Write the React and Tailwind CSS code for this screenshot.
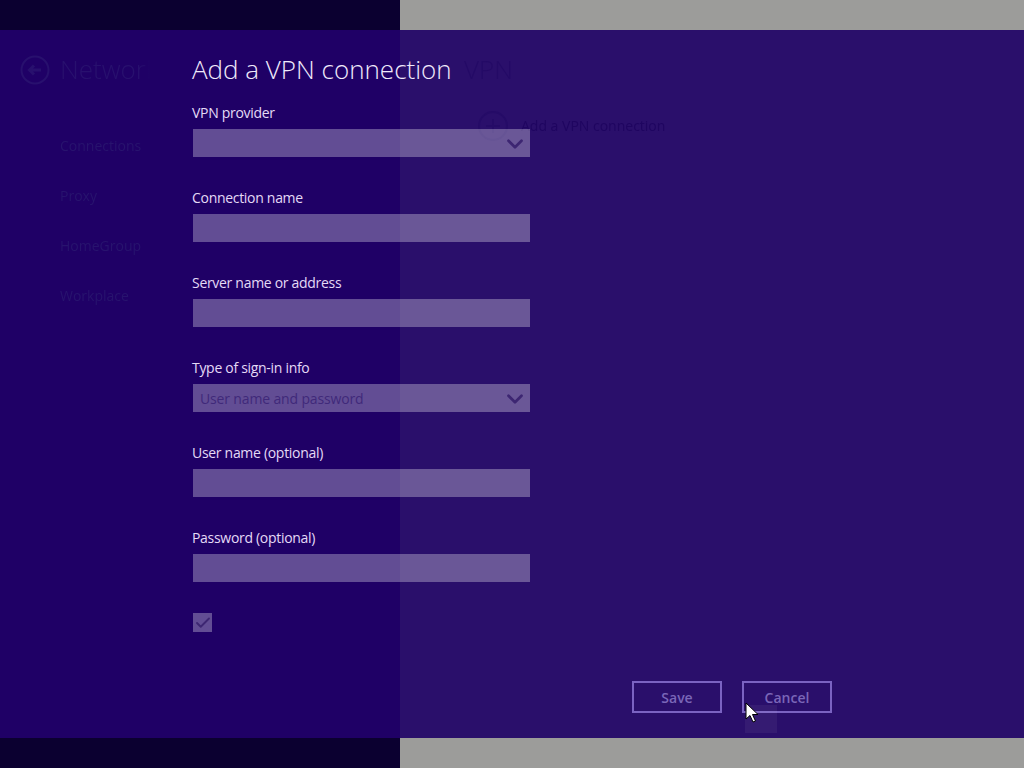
import { ChevronDown, Check } from "lucide-react";

const fields = [
  { label: "VPN provider", select: true },
  { label: "Connection name" },
  { label: "Server name or address" },
  { label: "Type of sign-in info", select: true, value: "User name and password" },
  { label: "User name (optional)" },
  { label: "Password (optional)" },
];

function Field({ label, select, value }) {
  return (
    <div className="h-[85px]">
      <div className="flex h-[30px] items-center pb-[4px] text-[14px] tracking-[-0.3px] text-[#e4daf6]">{label}</div>
      <div className="ml-px flex h-[28px] w-[337px] items-center justify-between bg-white/30 pl-[7px] pr-[2px] text-[14px] tracking-[-0.15px] text-[#40297a]">
        <span>{value}</span>
        {select && <ChevronDown size={26} strokeWidth={2.5} className="mt-[2px] text-[#3d2672]" />}
      </div>
    </div>
  );
}

// dimmed settings page that shows through the dialog band
function Backdrop() {
  return (
    <div className="absolute inset-0 text-[14px] blur-[0.7px]">
      <div className="absolute left-[20px] top-[20px] flex items-center gap-[10px] text-[#28106e]">
        <svg width="30" height="30" viewBox="0 0 30 30" fill="none" stroke="currentColor" strokeWidth="2">
          <circle cx="15" cy="15" r="13.5" />
          <path d="M21 15H10M14 10.5 9.5 15l4.5 4.5" strokeWidth="3" />
        </svg>
        <span className="bg-[linear-gradient(to_right,#28106e_80px,transparent_90px)] bg-clip-text text-[26px] font-light text-transparent">
          Network
        </span>
      </div>
      <div className="absolute left-[60px] top-[105px] flex flex-col gap-[29px] text-[#28136e]">
        <span className="h-[21px]">Connections</span>
        <span className="h-[21px]">Proxy</span>
        <span className="h-[21px]">HomeGroup</span>
        <span className="h-[21px]">Workplace</span>
      </div>
      <span className="absolute left-[464px] top-[20px] text-[26px] font-light text-[#240a66]">VPN</span>
      <svg className="absolute left-[477px] top-[80px] text-[#250b67]" width="32" height="32" viewBox="0 0 32 32" fill="none" stroke="currentColor" strokeWidth="2">
        <circle cx="16" cy="16" r="14" />
        <path d="M16 9v14M9 16h14" />
      </svg>
      <span className="absolute left-[521px] top-[85px] text-[#1f0560]">Add a VPN connection</span>
    </div>
  );
}

export default function App() {
  return (
    <div className="relative flex h-[768px] w-[1024px] flex-col overflow-hidden font-['Open_Sans',sans-serif]">
      <div className="flex h-[30px]">
        <div className="w-[400px] bg-[#0b0030]" />
        <div className="flex-1 bg-[#9c9c9a]" />
      </div>

      <div className="relative h-[708px] bg-[linear-gradient(to_right,#1f0066_400px,#2a0f6b_400px)]">
        <Backdrop />
        <div className="relative flex h-full flex-col pl-[192px] pr-[192px] pb-[25px]">
          <h1 className="flex h-[69px] items-end pb-[10px] text-[26px] font-light text-[#f0eafb]">
            Add a VPN connection
          </h1>
          {fields.map((f) => (
            <Field key={f.label} {...f} />
          ))}
          <div className="ml-px mt-[4px] flex h-[19px] w-[19px] items-center justify-center bg-white/30 text-[#3d2672]">
            <Check size={18} strokeWidth={2.5} />
          </div>
          <div className="mt-auto flex justify-end gap-[20px]">
            <button className="h-[32px] w-[90px] border-2 border-[#7b63c2] text-[14px] font-semibold text-[#7a66b8]">
              Save
            </button>
            <button className="h-[32px] w-[90px] border-2 border-[#7b63c2] text-[14px] font-semibold text-[#7a66b8]">
              Cancel
            </button>
          </div>
        </div>
        <div className="absolute left-[745px] top-[675px] h-[28px] w-[32px] bg-white/5" />
        <svg className="absolute left-[745px] top-[672px]" width="14" height="21" viewBox="0 0 14 21">
          <path d="M1 1v16l4-3.5 3 6.5 2.5-1-3-6.5H13z" fill="#fff" stroke="#000" strokeWidth="1" />
        </svg>
      </div>

      <div className="flex h-[30px]">
        <div className="w-[400px] bg-[#0b0030]" />
        <div className="flex-1 bg-[#9c9c9a]" />
      </div>
    </div>
  );
}
